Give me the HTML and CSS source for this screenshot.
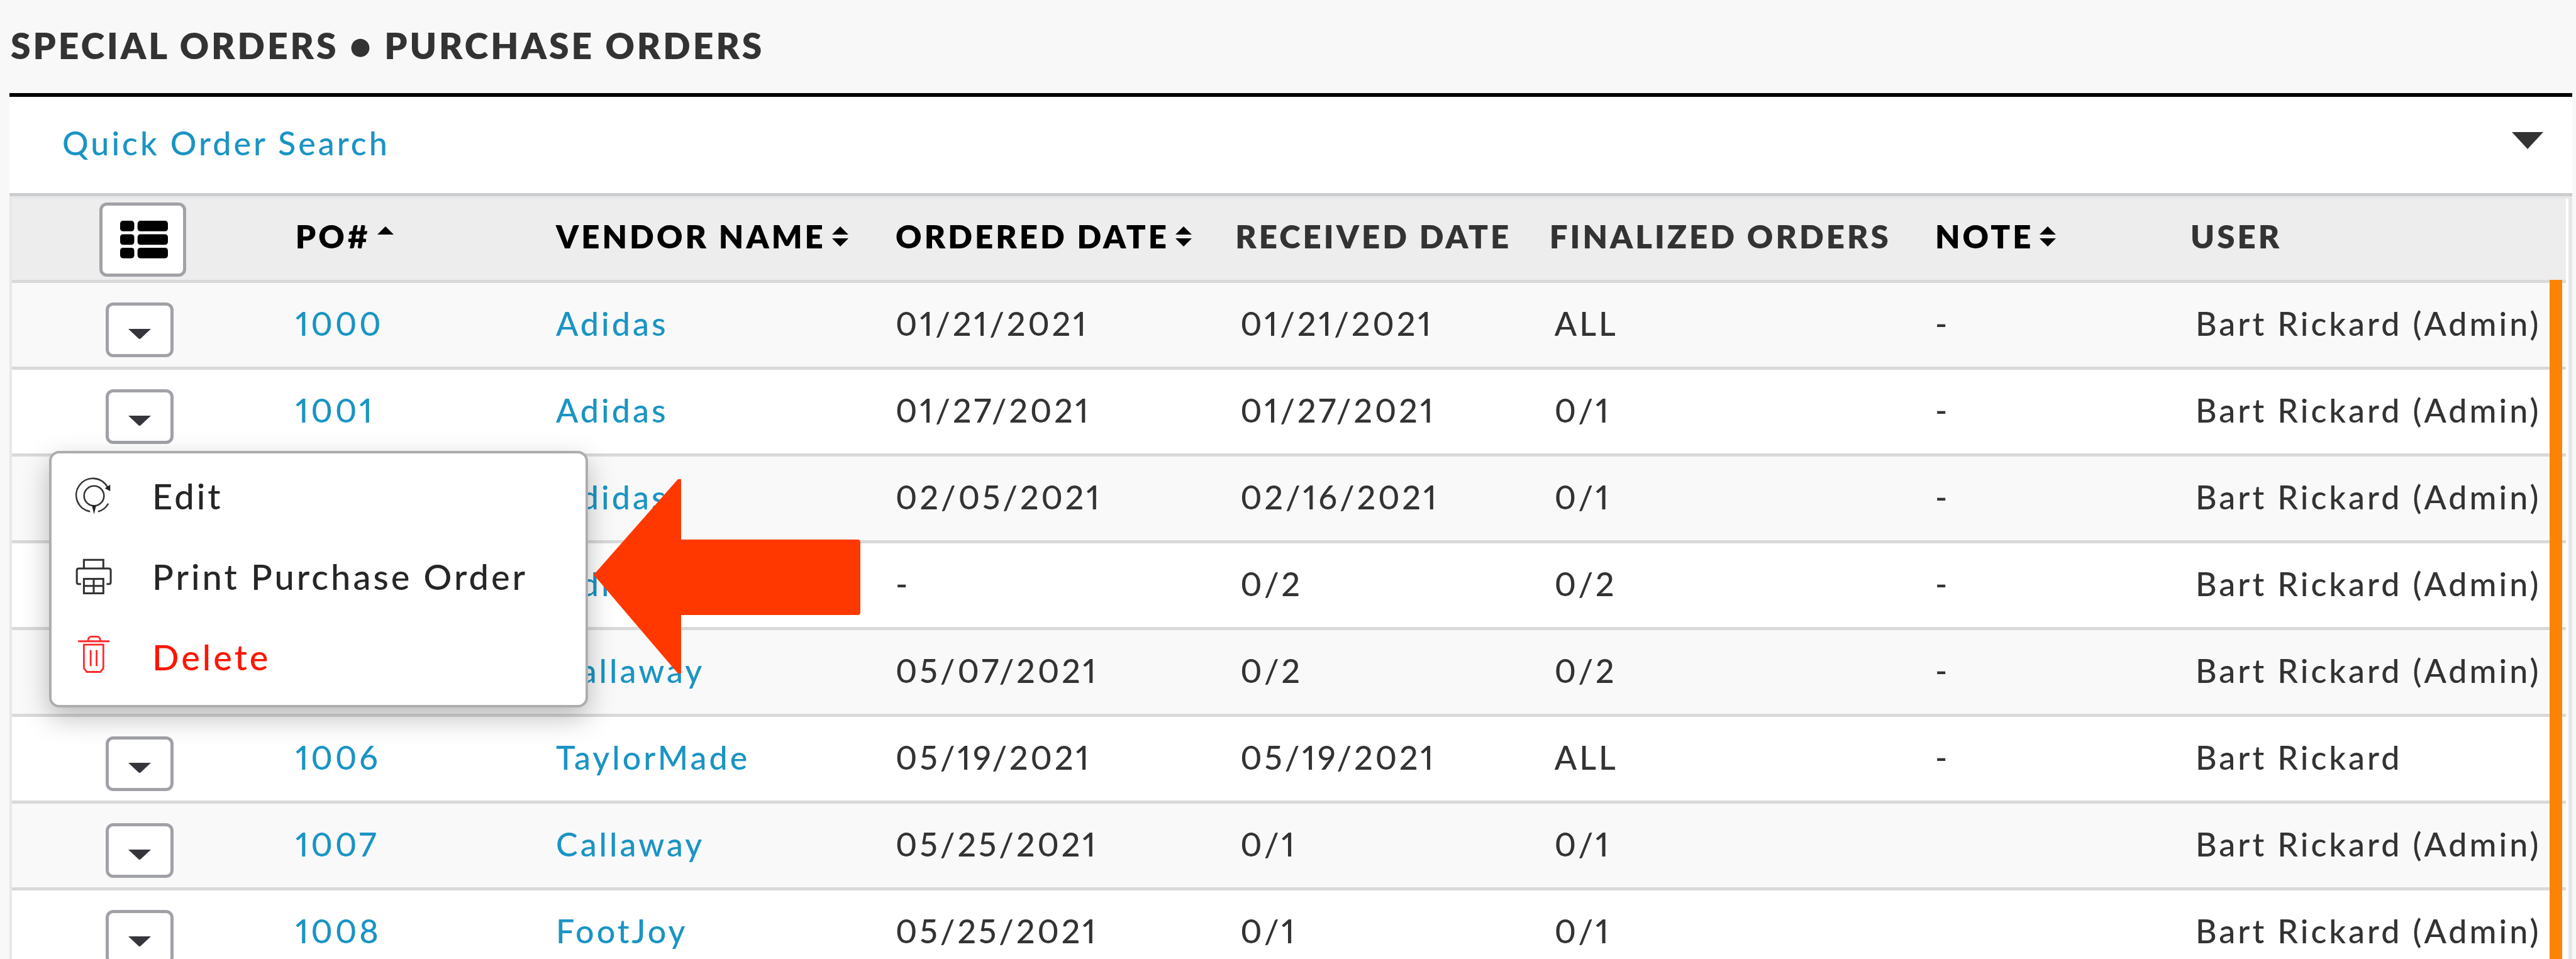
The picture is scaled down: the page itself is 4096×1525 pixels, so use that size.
FILE: index.html
```html
<!DOCTYPE html>
<html lang="en">
<head>
	<meta charset="UTF-8">
	<title>Purchase Orders</title>
	<link rel="stylesheet" href="styles.css">
</head>
<body>
	<h1 class="title">SPECIAL ORDERS ● PURCHASE ORDERS</h1>

	<div class="search">
		<a href="#" class="search-link">Quick Order Search</a>
		<button class="search-toggle" type="button" aria-label="Toggle search">
			<svg class="toggle-icon" viewBox="0 0 50 27"><path d="M0 0h50L25 27z"/></svg>
		</button>
	</div>

	<div class="orders">
		<table class="grid">
			<colgroup>
				<col class="col-menu">
				<col class="col-po">
				<col class="col-vendor">
				<col class="col-ordered">
				<col class="col-received">
				<col class="col-finalized">
				<col class="col-note">
				<col class="col-user">
			</colgroup>
			<thead>
				<tr>
					<th class="cell-menu">
						<button class="btn btn-list" type="button" aria-label="Columns">
							<svg class="list-icon" viewBox="0 0 294 232">
								<rect width="87" height="65" rx="18"/><rect x="107" width="187" height="65" rx="18"/>
								<rect y="83" width="87" height="65" rx="18"/><rect x="107" y="83" width="187" height="65" rx="18"/>
								<rect y="166" width="87" height="65" rx="18"/><rect x="107" y="166" width="187" height="65" rx="18"/>
							</svg>
						</button>
					</th>
					<th><button class="sort" type="button">PO#<svg class="sort-icon" viewBox="0 0 26 32"><path d="M0 13L13 0l13 13z"/></svg></button></th>
					<th><button class="sort" type="button">VENDOR NAME<svg class="sort-icon" viewBox="0 0 26 32"><path d="M0 13L13 0l13 13zM0 19h26L13 32z"/></svg></button></th>
					<th><button class="sort" type="button">ORDERED DATE<svg class="sort-icon" viewBox="0 0 26 32"><path d="M0 13L13 0l13 13zM0 19h26L13 32z"/></svg></button></th>
					<th>RECEIVED DATE</th>
					<th>FINALIZED ORDERS</th>
					<th><button class="sort" type="button">NOTE<svg class="sort-icon" viewBox="0 0 26 32"><path d="M0 13L13 0l13 13zM0 19h26L13 32z"/></svg></button></th>
					<th>USER</th>
				</tr>
			</thead>
			<tbody>
				<tr>
					<td class="cell-menu"><button class="btn btn-row" type="button" aria-label="Actions"><svg class="caret" viewBox="0 0 36 16"><path d="M0 0h36L20 15q-2 2-4 0z"/></svg></button></td>
					<td><a href="#">1000</a></td>
					<td><a href="#">Adidas</a></td>
					<td>01/21/2021</td>
					<td class="inset">01/21/2021</td>
					<td class="inset">ALL</td>
					<td>-</td>
					<td class="inset">Bart Rickard (Admin)</td>
				</tr>
				<tr>
					<td class="cell-menu">
						<button class="btn btn-row" type="button" aria-label="Actions"><svg class="caret" viewBox="0 0 36 16"><path d="M0 0h36L20 15q-2 2-4 0z"/></svg></button>
						<!-- open row menu -->
						<div class="menu">
							<button class="menu-item" type="button">
								<svg class="menu-icon" viewBox="22 62 282 282">
									<g fill="none" stroke="#333" stroke-width="10">
										<path d="M140 299A104 104 0 1 1 250 148M254 249A104 104 0 0 1 190 299"/>
										<circle cx="165" cy="201" r="62"/>
									</g>
									<path fill="#222" d="M232 154l34-22v40zM152 262h26l-13 54z"/>
								</svg>
								Edit
							</button>
							<button class="menu-item" type="button">
								<svg class="menu-icon" viewBox="22 566 282 282">
									<g fill="none" stroke="#333" stroke-width="12">
										<path d="M102 655v-53h121v53M84 753H70q-12 0-12-12v-73q0-12 12-12h187q12 0 12 12v73q0 12-12 12h-14"/>
										<path d="M102 721h121v90H102zM102 765h121M163 721v90"/>
									</g>
								</svg>
								Print Purchase Order
							</button>
							<button class="menu-item menu-delete" type="button">
								<svg class="menu-icon" viewBox="22 1061 282 282">
									<g fill="none" stroke="#ff2a2a" stroke-width="11">
										<path d="M66 1103h195M128 1098q2-24 20-24h36q18 0 20 24M102 1124h121v147l-18 23h-85l-18-23z"/>
										<path d="M144 1158v100M181 1158v100"/>
									</g>
								</svg>
								Delete
							</button>
						</div>
					</td>
					<td><a href="#">1001</a></td>
					<td><a href="#">Adidas</a></td>
					<td>01/27/2021</td>
					<td class="inset">01/27/2021</td>
					<td class="inset">0/1</td>
					<td>-</td>
					<td class="inset">Bart Rickard (Admin)</td>
				</tr>
				<tr>
					<td class="cell-menu"></td>
					<td></td>
					<td><a href="#">Adidas</a></td>
					<td>02/05/2021</td>
					<td class="inset">02/16/2021</td>
					<td class="inset">0/1</td>
					<td>-</td>
					<td class="inset">Bart Rickard (Admin)</td>
				</tr>
				<tr>
					<td class="cell-menu"></td>
					<td></td>
					<td><a href="#">Adidas</a></td>
					<td>-</td>
					<td class="inset">0/2</td>
					<td class="inset">0/2</td>
					<td>-</td>
					<td class="inset">Bart Rickard (Admin)</td>
				</tr>
				<tr>
					<td class="cell-menu"></td>
					<td></td>
					<td><a href="#">Callaway</a></td>
					<td>05/07/2021</td>
					<td class="inset">0/2</td>
					<td class="inset">0/2</td>
					<td>-</td>
					<td class="inset">Bart Rickard (Admin)</td>
				</tr>
				<tr>
					<td class="cell-menu"><button class="btn btn-row" type="button" aria-label="Actions"><svg class="caret" viewBox="0 0 36 16"><path d="M0 0h36L20 15q-2 2-4 0z"/></svg></button></td>
					<td><a href="#">1006</a></td>
					<td><a href="#">TaylorMade</a></td>
					<td>05/19/2021</td>
					<td class="inset">05/19/2021</td>
					<td class="inset">ALL</td>
					<td>-</td>
					<td class="inset">Bart Rickard</td>
				</tr>
				<tr>
					<td class="cell-menu"><button class="btn btn-row" type="button" aria-label="Actions"><svg class="caret" viewBox="0 0 36 16"><path d="M0 0h36L20 15q-2 2-4 0z"/></svg></button></td>
					<td><a href="#">1007</a></td>
					<td><a href="#">Callaway</a></td>
					<td>05/25/2021</td>
					<td class="inset">0/1</td>
					<td class="inset">0/1</td>
					<td></td>
					<td class="inset">Bart Rickard (Admin)</td>
				</tr>
				<tr>
					<td class="cell-menu"><button class="btn btn-row" type="button" aria-label="Actions"><svg class="caret" viewBox="0 0 36 16"><path d="M0 0h36L20 15q-2 2-4 0z"/></svg></button></td>
					<td><a href="#">1008</a></td>
					<td><a href="#">FootJoy</a></td>
					<td>05/25/2021</td>
					<td class="inset">0/1</td>
					<td class="inset">0/1</td>
					<td></td>
					<td class="inset">Bart Rickard (Admin)</td>
				</tr>
			</tbody>
		</table>
		<div class="marker"></div>
		<svg class="arrow" viewBox="0 0 424 309"><path d="M0 152L134 0h5v96h281q4 0 4 4v112q0 4-4 4H139v93h-5z"/></svg>
	</div>
</body>
</html>
```

FILE: styles.css
```css
*{
	box-sizing: border-box;
	margin: 0;
	padding: 0;
}
body{
	height: 100vh;
	overflow: hidden;
	padding: 0 6px 0 15px;
	background: #f8f8f8;
	color: #333;
	font-family: Lato, "Liberation Sans", sans-serif;
	font-size: 52px;
	font-weight: 500;
	line-height: 60px;
	letter-spacing: 4px;
	font-variant-numeric: proportional-nums;
}
a{
	color: #1a94c4;
	text-decoration: none;
}
button{
	border: 0;
	background: none;
	color: inherit;
	font: inherit;
	letter-spacing: inherit;
	cursor: pointer;
}
svg{
	display: block;
}

.title{
	height: 148px;
	padding: 42px 2px 0;
	font-size: 57px;
	font-weight: 800;
}

.search{
	display: flex;
	justify-content: space-between;
	align-items: flex-start;
	height: 164px;
	padding: 43px 46px 0 84px;
	background: #fff;
	border-top: 6px solid #000;
	border-bottom: 5px solid #cdcdcd;
}
.search-toggle{
	padding: 13px 0;
}
.toggle-icon{
	width: 50px;
	height: 27px;
	fill: #333;
}

.orders{
	position: relative;
	padding-right: 4px;
	background: #fff;
	border: solid #e5e7e9;
	border-width: 4px 6px 0 4px;
}
.grid{
	width: 100%;
	table-layout: fixed;
	border-collapse: separate;
	border-spacing: 0;
}
.col-menu{ width: 11.1%; }
.col-po{ width: 10.2%; }
.col-vendor{ width: 13.3%; }
.col-ordered{ width: 13.3%; }
.col-received{ width: 12.3%; }
.col-finalized{ width: 15.1%; }
.col-note{ width: 10%; }

th, td{
	border-bottom: 5px solid #d9d9d9;
	text-align: left;
	vertical-align: top;
	white-space: nowrap;
}
th{
	height: 134px;
	padding-top: 30px;
	background: #ededed;
	font-size: 51px;
	font-weight: 800;
}
td{
	height: 138px;
	padding-top: 34px;
}
tbody tr:nth-child(odd){
	background: #f9f9f9;
}
.inset{
	padding-left: 8px;
}

.sort{
	display: flex;
	align-items: center;
	gap: 10px;
	color: #000;
}
.sort-icon{
	width: 26px;
	height: 32px;
}

th.cell-menu{
	padding: 6px 0 0 139px;
}
td.cell-menu{
	position: relative;
	padding: 31px 0 0 149px;
}
.btn{
	display: flex;
	justify-content: center;
	align-items: center;
	background: #fff;
	border: 5px solid #a1a2a8;
	border-radius: 12px;
}
.btn-list{
	width: 138px;
	height: 118px;
	padding-left: 4px;
}
.list-icon{
	width: 76px;
	height: 60px;
}
.btn-row{
	width: 108px;
	height: 87px;
	padding-top: 12px;
}
.caret{
	width: 36px;
	height: 16px;
	fill: #36353c;
}

.menu{
	position: absolute;
	z-index: 2;
	left: 59px;
	top: 129px;
	width: 857px;
	padding: 4px 0 12px;
	background: #fff;
	border: 4px solid #adadad;
	border-radius: 16px;
	box-shadow: 0 16px 44px rgba(0, 0, 0, .26);
}
.menu-item{
	display: flex;
	align-items: center;
	gap: 57px;
	width: 100%;
	height: 128px;
	padding-left: 31px;
	font-size: 56px;
	color: #262626;
}
.menu-delete{
	color: #ff1500;
}
.menu-icon{
	width: 72px;
	height: 72px;
}

.marker{
	position: absolute;
	right: 10px;
	top: 129px;
	bottom: 0;
	width: 20px;
	background: #fd8400;
}
.arrow{
	position: absolute;
	z-index: 3;
	left: 925px;
	top: 446px;
	width: 424px;
	height: 309px;
	fill: #ff3800;
}
```
